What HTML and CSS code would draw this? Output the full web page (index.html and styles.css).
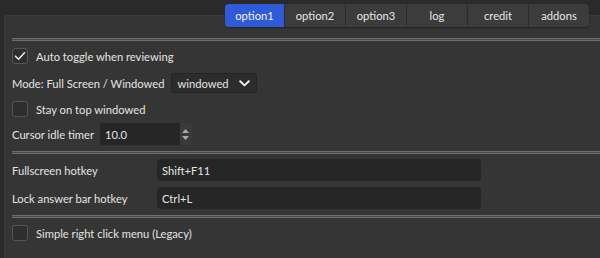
FILE: index.html
```html
<html>
<head>
<meta name="viewport" content="width=device-width, initial-scale=1.0">
<title>Options</title>
<link rel="stylesheet" href="styles.css">
</head>
<body>
    <div class="tabbar">
        <div class="tab active">option1</div>
        <div class="tab">option2</div>
        <div class="tab">option3</div>
        <div class="tab">log</div>
        <div class="tab">credit</div>
        <div class="tab">addons</div>
    </div>
    <div class="panel">
        <div class="sep"></div>

        <div class="row check-row r1">
            <span class="box">
                <svg width="12" height="10" viewBox="0 0 12 10"><path d="M1.5 5.2 L4.5 8.2 L10.5 1.8" fill="none" stroke="#e8e8e8" stroke-width="1.6" stroke-linecap="round" stroke-linejoin="round"/></svg>
            </span>
            <span class="label">Auto toggle when reviewing</span>
        </div>

        <div class="row r2">
            <span class="label">Mode: Full Screen / Windowed</span>
            <div class="combo">
                <span>windowed</span>
                <svg width="11" height="7" viewBox="0 0 11 7"><path d="M1.2 1.2 L5.5 5.4 L9.8 1.2" fill="none" stroke="#f0f0f0" stroke-width="2" stroke-linecap="round" stroke-linejoin="round"/></svg>
            </div>
        </div>

        <div class="row check-row r3">
            <span class="box"></span>
            <span class="label">Stay on top windowed</span>
        </div>

        <div class="row r4">
            <span class="label">Cursor idle timer</span>
            <div class="spin">
                <span>10.0</span>
                <div class="spin-btns">
                    <svg width="7" height="4" viewBox="0 0 7 4"><path d="M0 4 L3.5 0 L7 4 Z" fill="#a8a8a8"/></svg>
                    <svg width="7" height="4" viewBox="0 0 7 4"><path d="M0 0 L3.5 4 L7 0 Z" fill="#a8a8a8"/></svg>
                </div>
            </div>
        </div>

        <div class="sep s2"></div>

        <div class="hotkeys">
            <span class="label">Fullscreen hotkey</span>
            <div class="field">Shift+F11</div>
            <span class="label">Lock answer bar hotkey</span>
            <div class="field">Ctrl+L</div>
        </div>

        <div class="sep s3"></div>

        <div class="row check-row r5">
            <span class="box"></span>
            <span class="label">Simple right click menu (Legacy)</span>
        </div>
    </div>
</body>
</html>
```

FILE: styles.css
```css
:root {
    --outer-bg: #2a2a2a;
    --panel-bg: #353535;
    --field-bg: #262626;
    --text-color: #e4e4e4;
    --accent: #2f5bd6;
}

html, body {
    height: 100%;
}

body {
    margin: 0;
    background-color: var(--outer-bg);
    color: var(--text-color);
    font-family: Lato, 'Noto Sans', sans-serif;
    font-size: 11.2px;
    display: flex;
    flex-direction: column;
    overflow: hidden;
}

.tabbar {
    align-self: flex-end;
    display: flex;
    margin: 4px 11px 0 0;
    height: 23px;
    border-radius: 4px;
    overflow: hidden;
    background-color: #3c3c3c;
    position: relative;
    z-index: 1;
    box-shadow: 0 1px 2px rgba(0, 0, 0, 0.35);
}

.tab {
    display: flex;
    align-items: center;
    justify-content: center;
    width: 60px;
    border-left: 1px solid #2c2c2c;
    color: #e6e6e6;
}

.tab:first-child {
    border-left: none;
    width: 59px;
}

.tab.active {
    background-color: var(--accent);
    color: #f2f2f2;
}

.panel {
    flex: 1;
    margin: -12px 0 0 4px;
    background-color: var(--panel-bg);
    border: 1px solid #3d3d3d;
    border-right: none;
    border-bottom: none;
    border-top-left-radius: 4px;
    padding: 22px 0 0 7px;
    display: flex;
    flex-direction: column;
}

.sep {
    height: 1px;
    border-top: 1px solid #6e6e6e;
    border-bottom: 1px solid #6e6e6e;
    background-color: #4a4a4a;
}

.row {
    display: flex;
    align-items: center;
}

.check-row .label {
    margin-left: 8px;
}

.box {
    width: 14px;
    height: 14px;
    border: 1px solid #555;
    border-radius: 3px;
    background-color: #2e2e2e;
    display: flex;
    align-items: center;
    justify-content: center;
}

.r1 { margin-top: 7px; height: 16px; }
.r2 { margin-top: 9px; height: 20px; }
.r3 { margin-top: 8px; height: 16px; }
.r4 { margin-top: 6px; height: 22px; }
.s2 { margin-top: 6px; }
.s3 { margin-top: 6px; }
.r5 { margin-top: 7px; height: 16px; }

.combo {
    margin-left: 7px;
    width: 86px;
    height: 20px;
    box-sizing: border-box;
    background-color: #2c2c2c;
    border: 1px solid #242424;
    border-radius: 3px;
    display: flex;
    align-items: center;
    justify-content: space-between;
    padding: 0 6px 0 5px;
}

.spin {
    margin-left: 6px;
    width: 92px;
    height: 22px;
    box-sizing: border-box;
    background-color: var(--field-bg);
    border-radius: 3px;
    display: flex;
    align-items: center;
    justify-content: space-between;
    padding-left: 5px;
}

.spin-btns {
    width: 12px;
    height: 100%;
    background-color: #3a3a3a;
    border-radius: 0 3px 3px 0;
    display: flex;
    flex-direction: column;
    align-items: center;
    justify-content: center;
    gap: 3px;
}

.hotkeys {
    margin-top: 5px;
    display: grid;
    grid-template-columns: 145px 324px;
    grid-auto-rows: 22px;
    row-gap: 6px;
    align-items: center;
}

.field {
    height: 22px;
    background-color: var(--field-bg);
    border-radius: 4px;
    display: flex;
    align-items: center;
    padding-left: 5px;
}
```
